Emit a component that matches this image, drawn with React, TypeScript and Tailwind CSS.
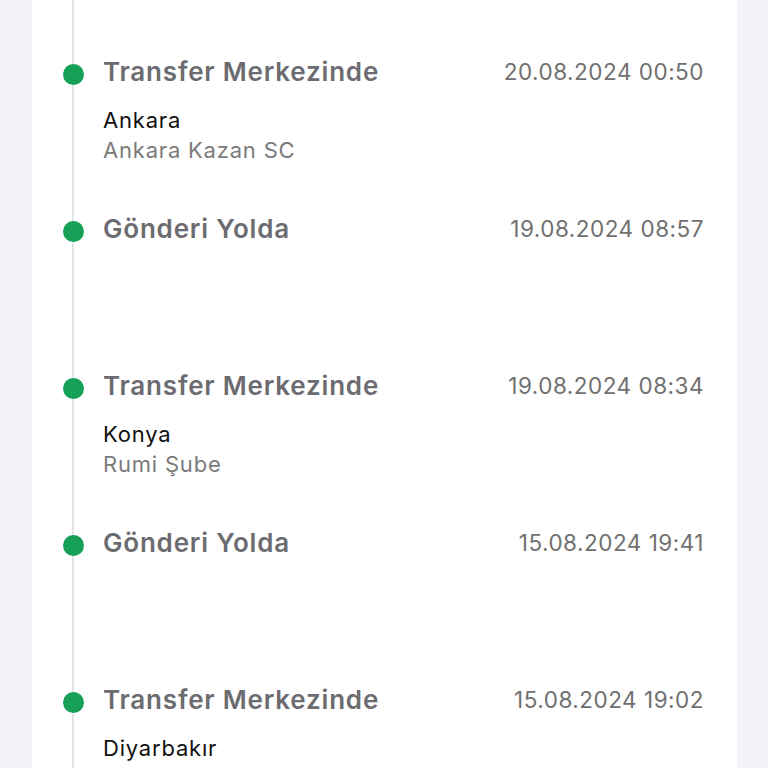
const events = [
  { title: "Transfer Merkezinde", date: "20.08.2024 00:50", city: "Ankara", branch: "Ankara Kazan SC" },
  { title: "Gönderi Yolda", date: "19.08.2024 08:57" },
  { title: "Transfer Merkezinde", date: "19.08.2024 08:34", city: "Konya", branch: "Rumi Şube" },
  { title: "Gönderi Yolda", date: "15.08.2024 19:41" },
  { title: "Transfer Merkezinde", date: "15.08.2024 19:02", city: "Diyarbakır" },
];

interface TimelineItemProps {
  title: string;
  date: string;
  city?: string;
  branch?: string;
}

function TimelineItem({ title, date, city, branch }: TimelineItemProps) {
  return (
    <div className="flex h-[157px] shrink-0">
      <div className="w-[71px] shrink-0 pl-[31px]">
        <div className="mt-[7px] h-[21px] w-[21px] rounded-full bg-[#17a058]" />
      </div>
      <div className="flex-1 pr-[33px]">
        <div className="flex items-center justify-between h-[30px]">
          <span className="text-[26px] leading-[30px] font-semibold tracking-[0.8px] text-[#6c6c70]">{title}</span>
          <span className="text-[22.5px] leading-[30px] tracking-[0.5px] text-[#707070]">{date}</span>
        </div>
        {city && (
          <div className="mt-[18px] text-[22px] leading-[30px] tracking-[0.8px]">
            <div className="text-[#111111]">{city}</div>
            {branch && <div className="text-[#7b7b7b]">{branch}</div>}
          </div>
        )}
      </div>
    </div>
  );
}

export default function App() {
  return (
    <div
      className="h-[768px] overflow-hidden bg-[#f2f2f7]"
      style={{ fontFamily: "Inter, 'Noto Sans', sans-serif" }}
    >
      <div className="relative ml-[32px] h-full w-[705px] bg-white">
        <div className="absolute left-[40px] top-0 bottom-0 w-[2px] bg-[#e4e4e8]" />
        <div className="relative flex flex-col pt-[57px]">
          {events.map((e, i) => (
            <TimelineItem key={i} {...e} />
          ))}
        </div>
      </div>
    </div>
  );
}
